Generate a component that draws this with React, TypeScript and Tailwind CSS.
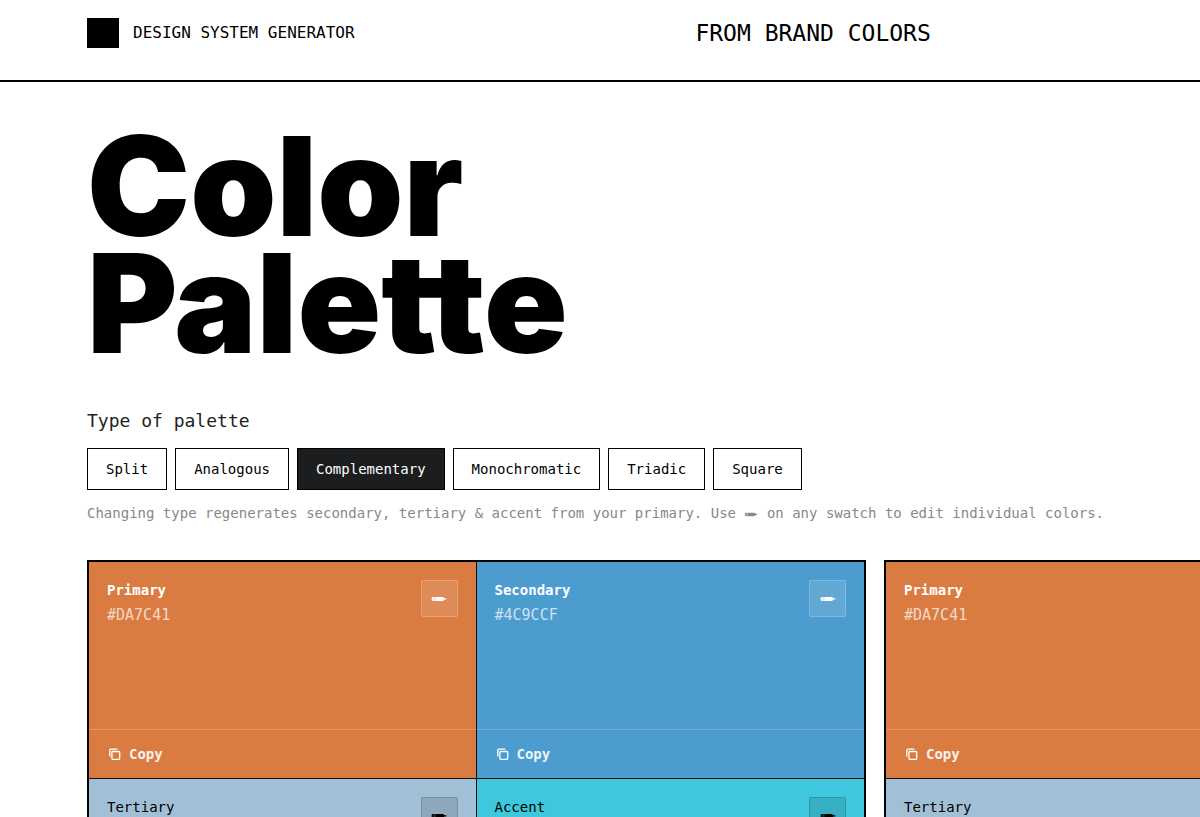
import React, {useState} from "react";


type Swatch = {
    name: string
    hex: string
    className: string
    dark?: boolean
}

const paletteTypes = ["Split", "Analogous", "Complementary", "Monochromatic", "Triadic", "Square"];

const swatches: Swatch[] = [
    {name: "Primary", hex: "#DA7C41", className: "bg-[#da7c41]"},
    {name: "Secondary", hex: "#4C9CCF", className: "bg-[#4c9ccf]"},
    {name: "Tertiary", hex: "#A2C0D5", className: "bg-[#a2c0d5]", dark: true},
    {name: "Accent", hex: "#3EC8DD", className: "bg-[#3ec8dd]", dark: true},
];

function PencilIcon({ className }: { className: string }) {
    return (
        <svg viewBox="0 0 16 6" className={className} fill="currentColor" aria-hidden="true">
            <path d="M1.8 1H3V5H1.8A1.2 1.2 0 0 1 .6 3.8V2.2A1.2 1.2 0 0 1 1.8 1Z" opacity=".9"/>
            <path d="M3 1h1.2v4H3z" opacity=".7"/>
            <path d="M4.2 1H12.2L13.4 2.2H15.4V3.6H13.4L12.2 5H4.2z"/>
        </svg>
    )
}

function CopyIcon() {
    return (
        <svg viewBox="0 0 12 12" className="h-3 w-3" fill="none" stroke="currentColor" strokeWidth="1.3" aria-hidden="true">
            <rect x="2.9" y="3.5" width="7.8" height="7.8" rx=".8"/>
            <path d="M.8 8.6V2.2a1 1 0 0 1 1-1h6.6"/>
        </svg>
    )
}

function SwatchCard({ swatch }: { swatch: Swatch }) {
    const { name, hex, className, dark } = swatch;

    return (
        <div className={`flex flex-col border-[#111] odd:border-r nth-[-n+2]:border-b ${className} ${dark ? "text-black" : "text-white"}`}>
            <div className="flex h-[167px] items-start justify-between p-[18px]">
                <div>
                    <h3 className={`text-sm ${dark ? "" : "font-bold"}`}>{name}</h3>
                    <p className="mt-[3px] text-[15px] leading-6 opacity-70">{hex}</p>
                </div>
                <button
                    type="button"
                    aria-label={`Edit ${name}`}
                    className={`flex h-[37px] w-[37px] items-center justify-center rounded-xs border
                                ${dark ? "border-black/15 bg-black/12" : "border-white/20 bg-white/12"}`}
                >
                    <PencilIcon className="h-1.5 w-4"/>
                </button>
            </div>
            <button
                type="button"
                className={`flex h-[49px] items-center gap-2 border-t px-5 text-sm
                            ${dark ? "border-black/15" : "border-white/20 font-bold"}`}
            >
                <CopyIcon/>
                <span className="opacity-90">Copy</span>
            </button>
        </div>
    )
}

function PaletteGrid() {
    return (
        <div className="grid w-[779px] shrink-0 grid-cols-2 border-2 border-black">
            {swatches.map((swatch) => (
                <SwatchCard key={swatch.name} swatch={swatch}/>
            ))}
        </div>
    )
}

function App() {

    const [selected, setSelected] = useState("Complementary");

    return (
        <div className="min-h-screen bg-white font-['DejaVu_Sans_Mono',monospace] text-black">
            <header className="grid grid-cols-[3fr_2fr] items-center border-b-2 border-black pt-[18px] pr-[99px] pb-8 pl-[87px]">
                <div className="flex items-center gap-3.5">
                    <span className="h-[30px] w-8 bg-black"/>
                    <span className="text-base leading-6">DESIGN SYSTEM GENERATOR</span>
                </div>
                <span className="text-[23px] leading-[30px] whitespace-nowrap">FROM BRAND COLORS</span>
            </header>

            <main className="pt-[45px] pb-16 pl-[87px]">
                <h1 className="font-[Inter,sans-serif] text-[138px] leading-[117px] font-black">
                    Color<br/>Palette
                </h1>

                <h2 className="mt-[46px] text-lg text-[#222]">Type of palette</h2>
                <div className="mt-[13px] flex flex-wrap gap-2">
                    {paletteTypes.map((type) => (
                        <button
                            key={type}
                            type="button"
                            aria-pressed={type === selected}
                            onClick={() => setSelected(type)}
                            className={`h-[42px] border border-black px-[18px] text-sm
                                        ${type === selected ? "bg-[#1c1d1f] text-white" : "bg-white text-black"}`}
                        >
                            {type}
                        </button>
                    ))}
                </div>
                <p className="mt-[13px] text-sm text-[#888]">
                    Changing type regenerates secondary, tertiary &amp; accent from your primary. Use <PencilIcon className="inline h-[5px] w-3.5"/> on any swatch to edit individual colors.
                </p>

                <div className="mt-[37px] flex gap-[18px] overflow-x-auto">
                    <PaletteGrid/>
                    <PaletteGrid/>
                </div>
            </main>
        </div>
    )
}

export default App;
